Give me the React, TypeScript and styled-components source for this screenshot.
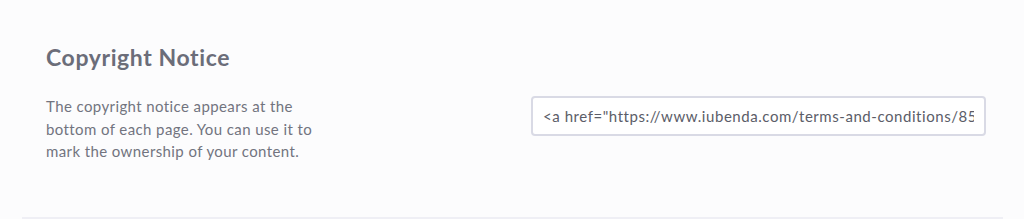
import React from 'react';
import styled, { createGlobalStyle } from 'styled-components';

const GlobalStyle = createGlobalStyle`
  html, body {
    margin: 0;
    padding: 0;
    background: #fcfcfd;
  }
  body {
    font-family: Lato, "Noto Sans", sans-serif;
  }
`;

const Page = styled.div`
  padding: 0 21px 0 22px;
`;

const Section = styled.section`
  padding: 42px 17px 54px 24px;
  border-bottom: 2px solid #efeff5;
`;

const Title = styled.h2`
  margin: 0 0 23px;
  font-size: 23px;
  line-height: 30px;
  font-weight: 700;
  color: #6b6d79;
  letter-spacing: 0.6px;
`;

const Row = styled.div`
  display: flex;
  justify-content: space-between;
  align-items: flex-start;
`;

const Description = styled.p`
  margin: 0;
  width: 285px;
  font-size: 15px;
  line-height: 22.5px;
  color: #72747f;
  letter-spacing: 0.4px;
`;

const CodeInput = styled.input`
  box-sizing: border-box;
  width: 455px;
  height: 40px;
  margin-top: 1px;
  padding: 0 10px;
  border: 2px solid #d9dae5;
  border-radius: 4px;
  background: #fff;
  font-family: Lato, "Noto Sans", sans-serif;
  font-size: 15px;
  color: #5b5d68;
  letter-spacing: 0.55px;
  outline: none;
`;

export default function App() {
  return (
    <>
      <GlobalStyle />
      <Page>
        <Section>
          <Title>Copyright Notice</Title>
          <Row>
            <Description>
              The copyright notice appears at the bottom of each page. You can use it to mark the ownership of your content.
            </Description>
            <CodeInput
              readOnly
              value={'<a href="https://www.iubenda.com/terms-and-conditions/85713052" class="iubenda-nostyle">Terms and Conditions</a>'}
            />
          </Row>
        </Section>
      </Page>
    </>
  );
}
